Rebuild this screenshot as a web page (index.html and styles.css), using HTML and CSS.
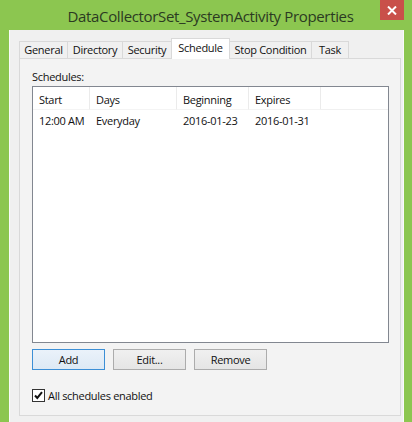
FILE: index.html
```html
<!DOCTYPE html>
<html>
<head>
<meta charset="utf-8">
<link rel="stylesheet" href="styles.css">
</head>
<body>
<div class="window">
  <div class="titlebar">
    <div class="spacer"></div>
    <div class="title">DataCollectorSet_SystemActivity Properties</div>
    <div class="close-wrap">
      <div class="close">
        <svg width="10" height="9" viewBox="0 0 10 9"><path d="M1 0.5 L9 8.5 M9 0.5 L1 8.5" stroke="#fff" stroke-width="2"/></svg>
      </div>
    </div>
  </div>
  <div class="client">
    <div class="tabs">
      <div class="tab t-general">General</div>
      <div class="tab t-directory">Directory</div>
      <div class="tab t-security">Security</div>
      <div class="tab active t-schedule">Schedule</div>
      <div class="tab t-stop">Stop Condition</div>
      <div class="tab t-task">Task</div>
    </div>
    <div class="panel">
      <div class="label">Schedules:</div>
      <div class="list">
        <div class="row header">
          <div class="cell c1">Start</div>
          <div class="cell c2">Days</div>
          <div class="cell c3">Beginning</div>
          <div class="cell c4">Expires</div>
          <div class="cell c5"></div>
        </div>
        <div class="row item">
          <div class="cell c1">12:00 AM</div>
          <div class="cell c2">Everyday</div>
          <div class="cell c3">2016-01-23</div>
          <div class="cell c4">2016-01-31</div>
        </div>
      </div>
      <div class="buttons">
        <div class="btn default">Add</div>
        <div class="btn">Edit...</div>
        <div class="btn">Remove</div>
      </div>
      <div class="check-row">
        <div class="checkbox">
          <svg width="11" height="11" viewBox="0 0 11 11"><path d="M2 5.5 L4.3 8 L9 2.2" fill="none" stroke="#111" stroke-width="2"/></svg>
        </div>
        <span>All schedules enabled</span>
      </div>
    </div>
  </div>
</div>
</body>
</html>
```
FILE: styles.css
```css
html, body {
  margin: 0;
  padding: 0;
}
body {
  width: 412px;
  height: 422px;
  overflow: hidden;
  font-family: "Open Sans", "Noto Sans", sans-serif;
  font-size: 11px;
  letter-spacing: -0.3px;
  color: #111;
}
.window {
  width: 412px;
  height: 422px;
  background: #8cc650;
  display: flex;
  flex-direction: column;
}
.titlebar {
  height: 30px;
  display: grid;
  grid-template-columns: 1fr auto 1fr;
  align-items: start;
}
.title {
  font-size: 15px;
  color: #2b3a22;
  line-height: 32px;
  letter-spacing: -0.35px;
  padding-left: 9px;
}
.close-wrap {
  display: flex;
  justify-content: flex-end;
  padding-right: 8px;
}
.close {
  width: 24px;
  height: 20px;
  background: #c9504a;
  display: flex;
  align-items: center;
  justify-content: center;
}
.client {
  flex: 1;
  margin: 0 8px 0 9px;
  background: #f0f0f0;
  border-left: 1px solid #fafafa;
  border-right: 1px solid #fafafa;
  padding: 8px 2px 0 9px;
  display: flex;
  flex-direction: column;
}
.tabs {
  display: flex;
  align-items: flex-end;
  height: 20px;
  position: relative;
  z-index: 1;
}
.tab {
  line-height: 16px;
  border: 1px solid #d9d9d9;
  border-bottom: none;
  border-right: none;
  background: #f0f0f0;
  text-align: center;
  box-sizing: border-box;
  height: 17px;
}
.t-general { width: 48px; }
.t-directory { width: 55px; }
.t-security { width: 49px; }
.t-schedule { width: 59px; }
.t-stop { width: 81px; }
.t-task { width: 38px; border-right: 1px solid #d9d9d9; }
.tab.active {
  height: 21px;
  line-height: 17px;
  background: #ffffff;
  border: 1px solid #d9d9d9;
  border-bottom: none;
  margin-bottom: -1px;
  padding-bottom: 1px;
}
.tab.active + .tab {
  border-left: none;
}
.panel {
  flex: 1;
  border: 1px solid #d9d9d9;
  background: #f3f3f3;
  margin-bottom: 6px;
  padding: 10px 12px 0 12px;
  display: flex;
  flex-direction: column;
}
.label {
  line-height: 16px;
  height: 16px;
  margin-bottom: 1px;
}
.list {
  width: 357px;
  height: 257px;
  box-sizing: border-box;
  border: 1px solid #828790;
  background: #fff;
}
.row {
  display: flex;
}
.header {
  height: 23px;
  line-height: 25px;
}
.item {
  height: 22px;
  line-height: 22px;
}
.cell {
  padding-left: 6px;
  box-sizing: border-box;
  white-space: nowrap;
}
.header .cell {
  border-right: 1px solid #ebebeb;
}
.c1 { width: 57px; }
.c2 { width: 87px; }
.c3 { width: 72px; }
.c4 { width: 72px; }
.header .c5 { width: 67px; border-right: none; border-bottom: 1px solid #f0f0f0; }
.header .c1, .header .c2, .header .c3, .header .c4 { border-bottom: 1px solid #f4f4f4; }
.buttons {
  display: flex;
  gap: 8px;
  margin-top: 6px;
}
.btn {
  width: 73px;
  height: 21px;
  box-sizing: border-box;
  border: 1px solid #acacac;
  background: linear-gradient(#f0f0f0, #e5e5e5);
  text-align: center;
  line-height: 19px;
}
.btn.default {
  border-color: #3c8fd6;
  background: linear-gradient(#eaf2fa, #dde9f5);
}
.check-row {
  display: flex;
  align-items: center;
  gap: 3px;
  margin-top: 18px;
}
.checkbox {
  width: 13px;
  height: 13px;
  box-sizing: border-box;
  border: 1px solid #333;
  background: #fff;
  display: flex;
  align-items: center;
  justify-content: center;
}
```
